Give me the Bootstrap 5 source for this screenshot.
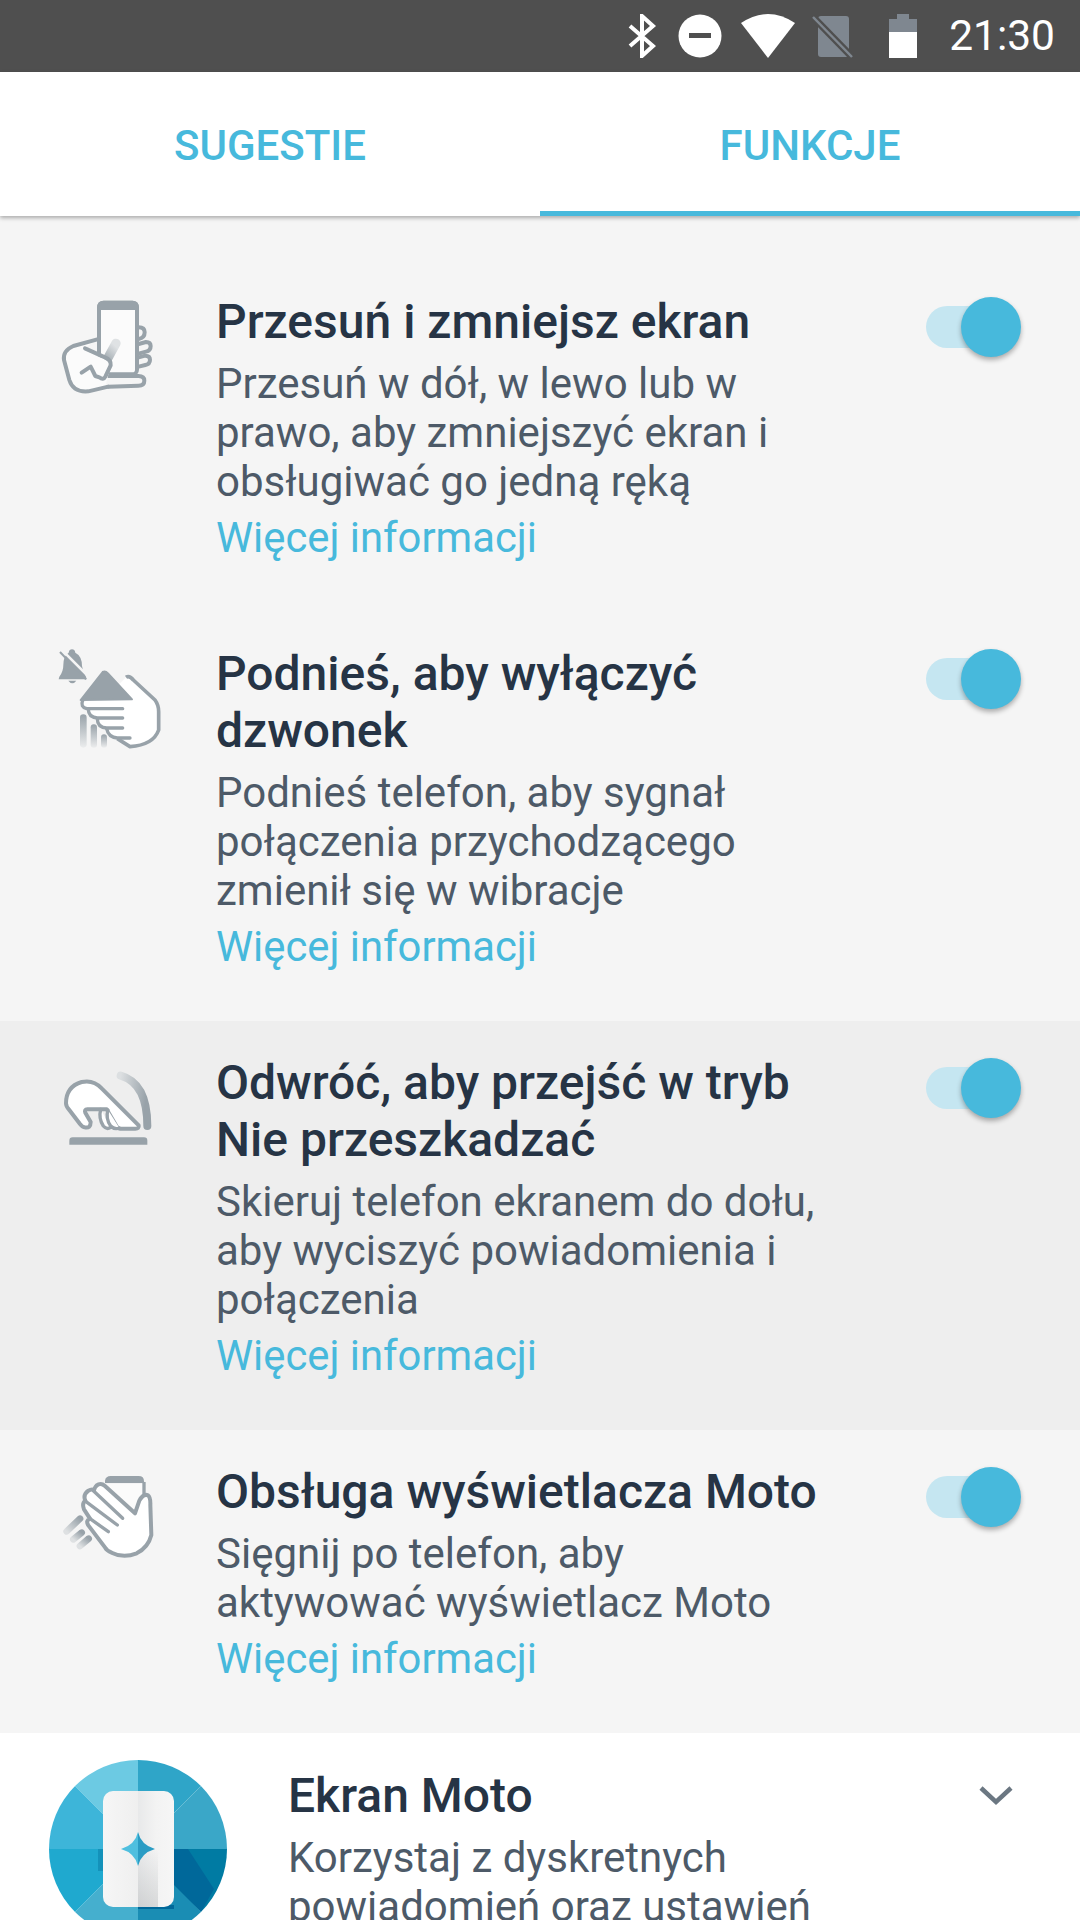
<!DOCTYPE html>
<html lang="pl">
<head>
<meta charset="utf-8">
<title>Moto</title>
<link href="https://cdn.jsdelivr.net/npm/bootstrap@5.3.0/dist/css/bootstrap.min.css" rel="stylesheet">
<style>
html,body{margin:0;height:1920px;overflow:hidden}
body{width:1080px;background:#f5f5f5;font-family:Roboto,"Liberation Sans",sans-serif;color:#263445}
.status-strip{height:72px;background:#4f4f4f;color:#fff;padding-right:25px}
.status-time{font-size:42.5px;line-height:72px;margin-left:32px}
.status-strip svg{display:block;flex:none}
.tab-strip{height:144px;background:#fff;box-shadow:0 2px 4px rgba(0,0,0,.3);position:relative}
.tab-strip .nav-link{height:144px;line-height:147px;padding:0;font-size:42px;font-weight:500;color:#47b9dc;text-transform:uppercase}
.tab-strip .nav-item{flex:1 1 50%;text-align:center}
.tab-strip .nav-link.chosen{border-bottom:5px solid #47b9dc}
.feature-list{padding-top:44px}
.feature-row{padding:20px 59px 50px 40px}
.feature-row.pressed{background:#eeeeee}
.feature-icon{flex:0 0 177px}
.feature-icon svg{display:block}
.feature-body{flex:0 0 620px;padding-top:13px;margin-left:-1px}
.feature-title{font-size:48px;line-height:57px;font-weight:500;color:#263445;margin:0 0 9px}
.feature-text{font-size:42px;line-height:49px;color:#4d5a68;margin:0}
.feature-more{display:block;font-size:41.8px;line-height:49px;color:#47b9dc;text-decoration:none;margin-top:7px}
.toggle-track{display:block;position:relative;flex:0 0 95px;width:95px;height:42px;margin-top:26px;margin-left:auto}
.toggle-track::before{content:"";position:absolute;left:0;top:0;width:84px;height:42px;border-radius:21px;background:#c5e6f1}
.toggle-track::after{content:"";position:absolute;right:0;top:-9px;width:60px;height:60px;border-radius:50%;background:#47b9dc;box-shadow:0 3px 5px rgba(0,0,0,.3)}
.moto-row{background:#fff;height:187px;padding:27px 0 0 49px;position:relative}
.moto-logo{flex:0 0 239px}
.moto-logo svg{display:block}
.moto-body{padding-top:7px}
.moto-chevron{position:absolute;left:978px;top:52px}
</style>
</head>
<body>
<div class="status-strip d-flex align-items-center justify-content-end">
  <svg width="30" height="44" viewBox="0 0 30 44" class="me-3"><path d="M2 12 L25 32 L14 42 V2 L25 12 L2 32" fill="none" stroke="#fff" stroke-width="4"/></svg>
  <svg width="44" height="44" viewBox="0 0 44 44" class="ms-1"><circle cx="22" cy="22" r="21.5" fill="#fff"/><rect x="11" y="19" width="22" height="5" fill="#4f4f4f"/></svg>
  <svg width="54" height="44" viewBox="0 0 54 44" style="margin-left:19px"><path d="M0 9 Q27 -9 54 9 L27 44 Z" fill="#fff"/></svg>
  <svg width="42" height="44" viewBox="0 0 42 44" style="margin-left:17px"><path d="M6 5 Q6 2 9 2 H34 Q37 2 37 5 V40 Q37 43 34 43 H9 Q6 43 6 40 Z" fill="#7f8790"/><path d="M1 3 L40 43" stroke="#4f4f4f" stroke-width="7"/><path d="M1 3 L40 43" stroke="#7f8790" stroke-width="2.5"/></svg>
  <svg width="28" height="44" viewBox="0 0 28 44" style="margin-left:35px"><path d="M0 5 H8 V0 H20 V5 H28 V18 H0 Z" fill="#7f8790"/><rect y="18" width="28" height="26" fill="#fff"/></svg>
  <span class="status-time">21:30</span>
</div>
<div class="tab-strip">
  <ul class="nav">
    <li class="nav-item"><a class="nav-link" href="#">Sugestie</a></li>
    <li class="nav-item"><a class="nav-link chosen" href="#">Funkcje</a></li>
  </ul>
</div>
<div class="feature-list">
  <div class="feature-row d-flex align-items-start">
    <div class="feature-icon">
      <svg width="140" height="130" viewBox="0 0 420 390">
        <defs><linearGradient id="sw" x1="0" y1="1" x2="0.5" y2="0"><stop offset="0" stop-color="#aeb6bb"/><stop offset="1" stop-color="#dfe2e4"/></linearGradient></defs>
        <g fill="none" stroke="#98a2a9" stroke-width="12" stroke-linejoin="round" stroke-linecap="round">
          <path d="M296 142 q18 0 18 15 q0 17 -18 20"/>
          <path d="M296 192 l22 -6 q14 0 14 12 q0 14 -14 17 l-22 6"/>
          <path d="M296 232 l20 -5 q14 0 14 12 q0 13 -14 16 l-20 5"/>
          <path d="M205 288 h90 q18 0 18 14 q0 15 -18 15 l-90 3"/>
          <rect x="177" y="68" width="114" height="215" rx="14" fill="#fbfbfb"/>
        </g>
        <path d="M172 90 V80 Q172 62 190 62 H278 Q296 62 296 80 V90 Z" fill="#98a2a9"/>
        <path d="M205 232 L228 190" stroke="url(#sw)" stroke-width="28" stroke-linecap="round" fill="none"/>
        <path d="M172 178 L100 198 Q68 212 72 240 L88 300 Q100 338 145 334 L196 322 Q200 300 215 248 L130 208 Z" fill="#fbfbfb"/>
        <g fill="none" stroke="#98a2a9" stroke-width="12" stroke-linejoin="round" stroke-linecap="round">
          <path d="M172 178 L100 198 Q68 212 72 240 L88 300 Q100 338 145 334 L205 320"/>
          <path d="M135 205 L195 232 Q214 240 212 256 L196 290 Q190 302 178 292 L166 288 L152 260 L125 278"/>
        </g>
      </svg>
    </div>
    <div class="feature-body">
      <h2 class="feature-title">Przesuń i zmniejsz ekran</h2>
      <p class="feature-text">Przesuń w dół, w lewo lub w prawo, aby zmniejszyć ekran i obsługiwać go jedną ręką</p>
      <a class="feature-more" href="#">Więcej informacji</a>
    </div>
    <span class="toggle-track"></span>
  </div>
  <div class="feature-row d-flex align-items-start">
    <div class="feature-icon">
      <svg width="140" height="130" viewBox="0 6 420 390">
        <defs><linearGradient id="fd" x1="0" y1="0" x2="0" y2="1"><stop offset="0" stop-color="#98a2a9"/><stop offset="1" stop-color="#98a2a9" stop-opacity=".1"/></linearGradient></defs>
        <path d="M96 58 Q104 58 106 68 Q126 78 126 108 Q128 125 138 140 L140 148 H56 L58 140 Q70 125 70 105 Q70 78 86 68 Q88 58 96 58 Z" fill="#98a2a9"/>
        <path d="M85 152 h24 q-12 16 -24 0 Z" fill="#98a2a9"/>
        <path d="M64 58 L148 142" stroke="#f5f5f5" stroke-width="8"/>
        <path d="M60 66 L138 148" stroke="#98a2a9" stroke-width="6"/>
        <path d="M130 215 Q120 232 140 238 L145 240 Q145 262 172 266 Q172 292 200 296 Q205 322 232 326 L270 350 Q340 345 356 300 V245 Q356 225 345 210 L280 150 Q268 135 258 142 L200 200 Z" fill="#fff"/>
        <path d="M258 142 Q268 135 280 150 L345 210 Q356 225 356 245 V300 Q340 345 270 350 L232 326" fill="none" stroke="#98a2a9" stroke-width="11" stroke-linejoin="round"/>
        <path d="M122 210 L188 126 Q196 122 204 130 L276 208 Z" fill="#98a2a9" stroke="#98a2a9" stroke-width="6" stroke-linejoin="round"/>
        <g fill="none" stroke="#98a2a9" stroke-width="10" stroke-linecap="round" stroke-linejoin="round">
          <path d="M128 212 Q120 230 140 236 H248"/>
          <path d="M145 238 Q145 262 172 264 H248"/>
          <path d="M172 266 Q172 292 200 294 H248"/>
          <path d="M200 296 Q205 322 232 324 H270"/>
        </g>
        <rect x="120" y="253" width="20" height="100" rx="10" fill="url(#fd)"/>
        <rect x="152" y="283" width="19" height="70" rx="9" fill="url(#fd)"/>
        <rect x="183" y="313" width="18" height="40" rx="9" fill="url(#fd)"/>
      </svg>
    </div>
    <div class="feature-body">
      <h2 class="feature-title">Podnieś, aby wyłączyć dzwonek</h2>
      <p class="feature-text">Podnieś telefon, aby sygnał połączenia przychodzącego zmienił się w wibracje</p>
      <a class="feature-more" href="#">Więcej informacji</a>
    </div>
    <span class="toggle-track"></span>
  </div>
  <div class="feature-row pressed d-flex align-items-start">
    <div class="feature-icon">
      <svg width="140" height="130" viewBox="0 -27 420 390">
        <defs><linearGradient id="ar" x1="0" y1="0" x2="1" y2="0.3"><stop offset="0" stop-color="#dcdfe1"/><stop offset="1" stop-color="#98a2a9"/></linearGradient></defs>
        <path d="M242 77 Q322 100 322 228" fill="none" stroke="url(#ar)" stroke-width="24" stroke-linecap="round"/>
        <path d="M78 160 Q78 110 125 96 Q160 88 185 115 L296 226 Q298 236 286 236 H240 Q232 236 228 226 L200 178 H142 Q132 178 136 188 L152 216 Q152 236 134 232 Q128 232 120 222 L88 180 Q78 170 78 160 Z" fill="#fff" stroke="#98a2a9" stroke-width="12" stroke-linejoin="round"/>
        <path d="M182 178 Q175 205 190 228 Q200 240 212 232 M204 180 Q196 205 212 228 Q224 240 238 234" fill="#fff" stroke="#98a2a9" stroke-width="10" stroke-linecap="round"/>
        <path d="M88 284 V272 Q88 262 98 262 H312 Q322 262 322 272 V284 Z" fill="#98a2a9"/>
      </svg>
    </div>
    <div class="feature-body">
      <h2 class="feature-title">Odwróć, aby przejść w tryb Nie przeszkadzać</h2>
      <p class="feature-text">Skieruj telefon ekranem do dołu, aby wyciszyć powiadomienia i połączenia</p>
      <a class="feature-more" href="#">Więcej informacji</a>
    </div>
    <span class="toggle-track"></span>
  </div>
  <div class="feature-row d-flex align-items-start">
    <div class="feature-icon">
      <svg width="140" height="130" viewBox="0 -30 420 390">
        <defs><linearGradient id="mo" x1="1" y1="0" x2="0" y2="1"><stop offset="0" stop-color="#98a2a9"/><stop offset="1" stop-color="#98a2a9" stop-opacity=".25"/></linearGradient></defs>
        <path d="M195 70 V62 Q197 48 212 48 H296 Q312 48 312 64 V70 Z" fill="#98a2a9"/>
        <path d="M195 70 H312 V110 L290 160 L200 100 Z" fill="#fbfbfb"/>
        <path d="M312 66 V104" stroke="#98a2a9" stroke-width="10"/>
        <path d="M285 160 L298 122 Q310 100 324 106 Q332 112 331 135 L334 225 Q325 262 290 280 Q250 296 215 278 Q200 272 195 262 L145 196 Q136 182 150 176 L132 148 Q125 130 136 122 Q128 105 145 92 Q155 86 162 90 Q168 72 182 72 Q188 72 195 78 Z" fill="#fff" stroke="#98a2a9" stroke-width="12" stroke-linejoin="round"/>
        <g fill="none" stroke="#98a2a9" stroke-width="10" stroke-linecap="round">
          <path d="M160 92 L248 175"/>
          <path d="M137 124 L232 195"/>
          <path d="M150 176 L205 215"/>
        </g>
        <g stroke="url(#mo)" stroke-linecap="round" stroke-width="20">
          <path d="M120 176 L80 214"/>
          <path d="M125 218 L100 238"/>
          <path d="M146 236 L120 258"/>
        </g>
      </svg>
    </div>
    <div class="feature-body">
      <h2 class="feature-title">Obsługa wyświetlacza Moto</h2>
      <p class="feature-text">Sięgnij po telefon, aby aktywować wyświetlacz Moto</p>
      <a class="feature-more" href="#">Więcej informacji</a>
    </div>
    <span class="toggle-track"></span>
  </div>
  <div class="moto-row d-flex align-items-start">
    <div class="moto-logo">
      <svg width="178" height="178" viewBox="-89 -89 178 178">
        <defs>
          <clipPath id="disc"><circle r="89"/></clipPath>
          <linearGradient id="cf" x1="0" y1="0" x2="1" y2="0"><stop offset="0" stop-color="#f6f6f6"/><stop offset=".49" stop-color="#efefef"/><stop offset=".5" stop-color="#e8e9ea"/><stop offset=".75" stop-color="#f3f3f3"/><stop offset="1" stop-color="#f6f6f6"/></linearGradient>
          <linearGradient id="cs" x1="0" y1="0" x2="0" y2="1"><stop offset=".5" stop-color="#8f9396" stop-opacity="0"/><stop offset="1" stop-color="#8f9396" stop-opacity=".28"/></linearGradient>
        </defs>
        <g clip-path="url(#disc)">
          <polygon points="0,0 0,-100 -100,-100" fill="#6ccae3"/>
          <polygon points="0,0 100,-100 0,-100" fill="#2fa5c8"/>
          <polygon points="0,0 100,0 100,-100" fill="#3aa7c8"/>
          <polygon points="0,0 100,100 100,0" fill="#007ba3"/>
          <polygon points="36,0 50,0 76,40 63,63 36,38" fill="#00689a"/>
          <polygon points="0,0 0,100 100,100" fill="#1a8db4"/>
          <polygon points="0,0 -100,100 0,100" fill="#45afce"/>
          <polygon points="0,0 -100,0 -100,100" fill="#1fa9cf"/>
          <polygon points="0,0 -100,-100 -100,0" fill="#3db5d9"/>
        </g>
        <rect x="-40" y="0" width="6" height="22" fill="#1492ba"/>
        <rect x="0" y="56" width="36" height="4" fill="#00689a"/>
        <rect x="-35" y="-58" width="71" height="116" rx="10" fill="url(#cf)"/>
        <rect x="0" y="-58" width="20" height="116" fill="url(#cs)"/>
        <path d="M0 -17 Q3 -4 17 0 Q3 4 0 17 Z" fill="#2a9cc4"/>
        <path d="M0 -17 Q-3 -4 -17 0 Q-3 4 0 17 Z" fill="#4fbfdf"/>
      </svg>
    </div>
    <div class="moto-body">
      <h2 class="feature-title">Ekran Moto</h2>
      <p class="feature-text">Korzystaj z dyskretnych<br>powiadomień oraz ustawień</p>
    </div>
    <svg class="moto-chevron" width="36" height="22" viewBox="0 0 36 22"><path d="M3 3 L18 17 L33 3" fill="none" stroke="#6b7782" stroke-width="4.5"/></svg>
  </div>
</div>
</body>
</html>
